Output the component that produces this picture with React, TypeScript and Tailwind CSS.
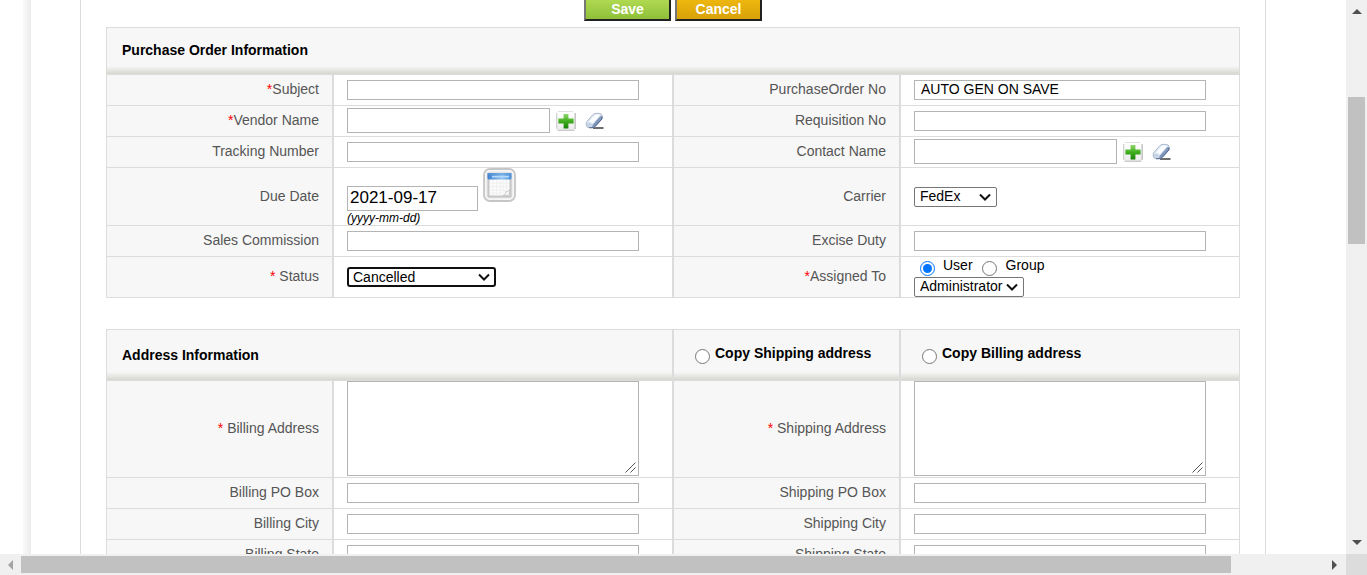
import React from "react";

const rowClass = "grid grid-cols-[227px_1fr_227px_1fr]";
const inputClass = "block h-5 w-[292px] border border-[#b4b4b4] bg-white px-1.5 pb-0.5 text-sm text-black outline-none";

function LabelCell({ id, text, mark }: { id: string; text: string; mark?: string }) {
  return (
    <div className="flex items-center justify-end border-x border-b border-[#dcdcdc] bg-[#f7f7f7] pr-[13px] pb-0.5 text-[#555]">
      <label htmlFor={id}>
        {mark && <span className="whitespace-pre text-[#ff0000]">{mark}</span>}
        {text}
      </label>
    </div>
  );
}

function FieldCell({ children }: { children: React.ReactNode }) {
  return (
    <div className="flex min-h-[31px] flex-col items-start justify-center border-x border-b border-[#dcdcdc] pl-[13px]">
      {children}
    </div>
  );
}

function TextRow({ left, right }: { left: string; right: string }) {
  return (
    <div className={rowClass}>
      <LabelCell id={left} text={left} />
      <FieldCell>
        <input id={left} type="text" className={inputClass} />
      </FieldCell>
      <LabelCell id={right} text={right} />
      <FieldCell>
        <input id={right} type="text" className={inputClass} />
      </FieldCell>
    </div>
  );
}

function Chevron() {
  return (
    <svg className="pointer-events-none absolute top-1/2 right-[5px] -translate-y-1/2" width="14" height="10" viewBox="0 0 14 10" aria-hidden="true">
      <path d="M2 2.5 L7 7.5 L12 2.5" fill="none" stroke="#111" strokeWidth="2" />
    </svg>
  );
}

function SelectBox({ id, options, width, focused, label }: { id: string; options: string[]; width: string; focused?: boolean; label?: string }) {
  return (
    <div className={`relative ${width}`}>
      <select
        id={id}
        aria-label={label}
        className={`block h-5 w-full appearance-none bg-white pb-0.5 text-sm leading-4 text-black outline-none ${
          focused ? "rounded-[3px] border-2 border-[#101010] pl-1" : "rounded-[2px] border border-[#767676] pl-[5px]"
        }`}
      >
        {options.map((o) => (
          <option key={o}>{o}</option>
        ))}
      </select>
      <Chevron />
    </div>
  );
}

function PlusIcon() {
  return (
    <svg width="20" height="20" viewBox="0 0 20 20" aria-hidden="true">
      <defs>
        <linearGradient id="plusFill" x1="0" y1="0" x2="0" y2="1">
          <stop offset="0" stopColor="#8fd66a" />
          <stop offset="0.5" stopColor="#3fae1c" />
          <stop offset="1" stopColor="#17800a" />
        </linearGradient>
        <linearGradient id="plusTile" x1="0" y1="0" x2="0" y2="1">
          <stop offset="0" stopColor="#ffffff" />
          <stop offset="1" stopColor="#ececec" />
        </linearGradient>
      </defs>
      <path d="M2 0.5 H17" stroke="#e0e0e0" />
      <rect x="1" y="1.5" width="18" height="17" rx="1" fill="url(#plusTile)" />
      <path d="M0.7 2 V18" stroke="#cfcfcf" strokeWidth="1.2" />
      <path d="M19.2 2 V18" stroke="#c0c0c0" strokeWidth="1.4" />
      <path d="M1.5 19.2 H18.5" stroke="#c8c8c8" strokeWidth="1.4" />
      <path d="M7.6 3 H12.4 V7.6 H17.6 V12.4 H12.4 V17.6 H7.6 V12.4 H2.4 V7.6 H7.6 Z" fill="url(#plusFill)" />
    </svg>
  );
}

function EraserIcon() {
  return (
    <svg width="20" height="18" viewBox="0 0 20 18" aria-hidden="true">
      <path d="M8 16 H18.5" stroke="#1c1c1c" strokeWidth="1.3" />
      <path d="M1.4 10.2 L7.5 3 Q9 1.4 11 1.4 H14.2 Q17.4 1.6 17.2 4.6 L16.9 7 L10.4 14.2 Q9 15.7 7 15.7 H4.2 Q1.2 15.5 1.2 12.8 Z" fill="#dfe8f3" stroke="#a3b1c6" strokeWidth="0.9" />
      <path d="M17.1 4.4 L16.9 7 L10.4 14.2 Q9.2 15.7 7 15.7 L7.6 12.8 L15.4 4 Z" fill="#8197bb" />
      <path d="M17.2 4.6 L16.9 7 L10.4 14.2 Q9 15.7 7 15.7 H4.2" fill="none" stroke="#4f6690" strokeWidth="1" />
      <path d="M4 9.7 L9.4 3.4 Q10.4 2.4 11.6 2.4 H14 Q15.2 2.6 14.4 3.8 L7.8 11.4 Q6.6 10 4 9.7 Z" fill="#fbfdff" />
      <path d="M2 11.4 Q4 10 6.8 12.2 Q7.6 13.4 6.4 14.8 H4.4 Q2 14.5 2 12.6 Z" fill="#c3d1e4" />
    </svg>
  );
}

function CalendarIcon() {
  return (
    <svg width="33" height="34" viewBox="0 0 33 34" aria-hidden="true">
      <defs>
        <linearGradient id="calBar" x1="0" y1="0" x2="1" y2="0">
          <stop offset="0" stopColor="#3e80cc" />
          <stop offset="0.6" stopColor="#8fc1ee" />
          <stop offset="1" stopColor="#4b8fd8" />
        </linearGradient>
      </defs>
      <rect x="1" y="1" width="31" height="32" rx="6" fill="#e6e6e6" stroke="#c6c6c6" strokeWidth="1.8" />
      <rect x="2.8" y="2.8" width="27.4" height="28.4" rx="4" fill="none" stroke="#f8f8f8" strokeWidth="1.4" />
      <rect x="4.5" y="6" width="24" height="23.5" rx="1.5" fill="#c6c6c6" />
      <rect x="6.5" y="10" width="20" height="17.5" fill="#fbfbfb" />
      <path d="M10 12 V27 M13.5 12 V27 M17 12 V27 M20 12 V24 M23.5 12 V22 M7 15 H26 M7 18.5 H26 M7 22 H22 M7 25 H20" stroke="#f0f0f0" strokeWidth="1" />
      <path d="M4.5 5 H28.5 V10 Q28.5 11.5 27 11.5 H6 Q4.5 11.5 4.5 10 Z" fill="url(#calBar)" />
      <path d="M5 6 H28" stroke="#5f9bdb" strokeWidth="1" />
      <path d="M9 8.7 H26" stroke="#b4daf8" strokeWidth="1.6" />
      <path d="M19.5 27.5 Q23.4 26.6 22.6 23.4 Q25.2 23.8 26.5 21.6 V27.5 Z" fill="#f4f4f4" stroke="#cccccc" strokeWidth="1" />
    </svg>
  );
}

function LookupField({ id }: { id: string }) {
  return (
    <div className="flex items-center pb-px">
      <input id={id} type="text" className="h-[25px] w-[203px] border border-[#b4b4b4] bg-white px-1.5 text-sm outline-none" />
      <button type="button" aria-label="Select" className="ml-1.5">
        <PlusIcon />
      </button>
      <button type="button" aria-label="Clear" className="ml-[9px]">
        <EraserIcon />
      </button>
    </div>
  );
}

function HeaderShade() {
  return <div className="h-2 bg-linear-to-b from-[#f7f7f7] to-[#d6d7cf]" />;
}

function CopyCell({ name }: { name: string }) {
  return (
    <div className="flex flex-col border-x border-t border-b border-[#dcdcdc] bg-[#f7f7f7]">
      <label className="flex flex-1 items-start gap-[5px] pt-3.5 pl-[21px] font-bold text-black">
        <input type="radio" name="copy" className="mt-[5px] size-[15px]" />
        {name}
      </label>
      <HeaderShade />
    </div>
  );
}

function AddressCell({ id }: { id: string }) {
  return (
    <FieldCell>
      <div className="relative mb-px">
        <textarea id={id} className="block h-[95px] w-[292px] resize-none border border-[#b4b4b4] bg-white p-1 outline-none" />
        <svg className="pointer-events-none absolute right-[3px] bottom-[3px]" width="11" height="11" viewBox="0 0 11 11" aria-hidden="true">
          <path d="M0.5 10.5 L10.5 0.5 M5.5 10.5 L10.5 5.5" stroke="#555" strokeWidth="1" />
        </svg>
      </div>
    </FieldCell>
  );
}

export default function App() {
  return (
    <div className="flex h-screen flex-col overflow-hidden bg-white font-['Liberation_Sans',Arial,sans-serif] text-sm leading-[18px] text-black">
      <div className="flex min-h-0 flex-1">
        <main className="flex min-w-0 flex-1 overflow-hidden">
          <div className="ml-[23px] w-2 shrink-0 bg-linear-to-r from-[#fafafa] to-[#ebebeb]" />
          <form className="mr-20 ml-[49px] h-max flex-1 border-x border-[#dcdcdc] px-[25px] pb-10">
            <div className="flex h-[21px] items-end justify-center gap-1">
              <button type="button" className="h-[25px] w-[87px] shrink-0 border-2 border-t-[#767676] border-r-[#212121] border-b-[#212121] border-l-[#767676] bg-linear-to-b from-[#b2dc52] to-[#8fbf3a] font-bold text-white">
                Save
              </button>
              <button type="button" className="h-[25px] w-[87px] shrink-0 border-2 border-t-[#767676] border-r-[#212121] border-b-[#212121] border-l-[#767676] bg-linear-to-b from-[#efb90f] to-[#d9a108] font-bold text-white">
                Cancel
              </button>
            </div>

            <section className="mt-1.5">
              <div className="flex h-12 flex-col border border-[#dcdcdc] bg-[#f7f7f7]">
                <h2 className="flex-1 pt-[13px] pl-[15px] font-bold">Purchase Order Information</h2>
                <HeaderShade />
              </div>
              <div className={rowClass}>
                <LabelCell id="subject" mark="*" text="Subject" />
                <FieldCell>
                  <input id="subject" type="text" className={inputClass} />
                </FieldCell>
                <LabelCell id="po-no" text="PurchaseOrder No" />
                <FieldCell>
                  <input id="po-no" type="text" readOnly value="AUTO GEN ON SAVE" className={inputClass} />
                </FieldCell>
              </div>
              <div className={rowClass}>
                <LabelCell id="vendor" mark="*" text="Vendor Name" />
                <FieldCell>
                  <LookupField id="vendor" />
                </FieldCell>
                <LabelCell id="requisition" text="Requisition No" />
                <FieldCell>
                  <input id="requisition" type="text" className={inputClass} />
                </FieldCell>
              </div>
              <div className={rowClass}>
                <LabelCell id="tracking" text="Tracking Number" />
                <FieldCell>
                  <input id="tracking" type="text" className={inputClass} />
                </FieldCell>
                <LabelCell id="contact" text="Contact Name" />
                <FieldCell>
                  <LookupField id="contact" />
                </FieldCell>
              </div>
              <div className={rowClass}>
                <LabelCell id="due-date" text="Due Date" />
                <FieldCell>
                  <div className="flex items-start gap-[5px]">
                    <input id="due-date" type="text" defaultValue="2021-09-17" className="mt-[18px] h-[25px] w-[131px] border border-[#b4b4b4] bg-white px-0.5 pb-0.5 text-[17px] outline-none" />
                    <button type="button" aria-label="Choose date">
                      <CalendarIcon />
                    </button>
                  </div>
                  <em className="text-xs leading-[14px]">(yyyy-mm-dd)</em>
                </FieldCell>
                <LabelCell id="carrier" text="Carrier" />
                <FieldCell>
                  <SelectBox id="carrier" width="w-[83px]" options={["FedEx", "UPS", "USPS", "DHL", "BlueDart"]} />
                </FieldCell>
              </div>
              <TextRow left="Sales Commission" right="Excise Duty" />
              <div className={rowClass}>
                <LabelCell id="status" mark="* " text="Status" />
                <FieldCell>
                  <SelectBox id="status" width="w-[149px]" focused options={["Cancelled", "Created", "Approved", "Delivered"]} />
                </FieldCell>
                <LabelCell id="assignee" mark="*" text="Assigned To" />
                <FieldCell>
                  <div className="flex h-5 items-start pl-1.5 leading-4">
                    <input id="user" type="radio" name="assign" defaultChecked className="mt-1 size-[15px]" />
                    <label htmlFor="user" className="ml-2">
                      User
                    </label>
                    <input id="group" type="radio" name="assign" className="mt-1 ml-[9px] size-[15px]" />
                    <label htmlFor="group" className="ml-[9px]">
                      Group
                    </label>
                  </div>
                  <SelectBox id="assignee" width="w-[110px]" options={["Administrator"]} />
                </FieldCell>
              </div>
            </section>

            <section className="mt-[31px]">
              <div className="grid h-[52px] grid-cols-[227px_1fr_227px_1fr]">
                <div className="col-span-2 flex flex-col border border-[#dcdcdc] bg-[#f7f7f7]">
                  <h2 className="flex-1 pt-4 pl-[15px] font-bold">Address Information</h2>
                  <HeaderShade />
                </div>
                <CopyCell name="Copy Shipping address" />
                <CopyCell name="Copy Billing address" />
              </div>
              <div className={rowClass}>
                <LabelCell id="billing-address" mark="* " text="Billing Address" />
                <AddressCell id="billing-address" />
                <LabelCell id="shipping-address" mark="* " text="Shipping Address" />
                <AddressCell id="shipping-address" />
              </div>
              <TextRow left="Billing PO Box" right="Shipping PO Box" />
              <TextRow left="Billing City" right="Shipping City" />
              <TextRow left="Billing State" right="Shipping State" />
            </section>
          </form>
        </main>
        <div className="flex w-[21px] shrink-0 flex-col items-center bg-[#f0f0f0]">
          <svg className="mt-2 shrink-0" width="10" height="6" viewBox="0 0 10 6" aria-hidden="true">
            <path d="M0 6 L5 1 L10 6 Z" fill="#505050" />
          </svg>
          <div className="mt-[83px] h-[147px] w-[17px] bg-[#c1c1c1]" />
          <svg className="mt-auto mb-2 shrink-0" width="10" height="6" viewBox="0 0 10 6" aria-hidden="true">
            <path d="M0 0 L5 5 L10 0 Z" fill="#505050" />
          </svg>
        </div>
      </div>
      <div className="flex h-[21px] shrink-0">
        <div className="flex min-w-0 flex-1 items-center bg-[#f0f0f0]">
          <svg className="ml-2 shrink-0" width="6" height="10" viewBox="0 0 6 10" aria-hidden="true">
            <path d="M5 0 L0 5 L5 10 Z" fill="#a3a3a3" />
          </svg>
          <div className="ml-[7px] h-[17px] flex-1 bg-[#c1c1c1]" />
          <svg className="mr-2 ml-[101px] shrink-0" width="6" height="10" viewBox="0 0 6 10" aria-hidden="true">
            <path d="M0 0 L5 5 L0 10 Z" fill="#505050" />
          </svg>
        </div>
        <div className="w-[21px] bg-[#dcdcdc]" />
      </div>
    </div>
  );
}
